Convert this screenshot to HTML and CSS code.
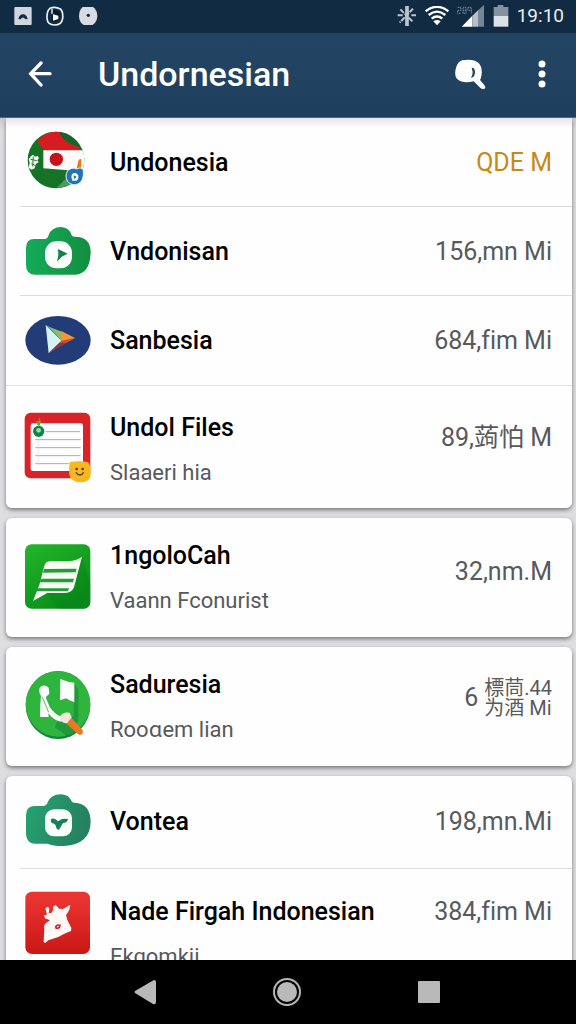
FILE: index.html
```html
<!DOCTYPE html>
<html lang="id">
<head>
<meta charset="utf-8">
<meta name="viewport" content="width=device-width, initial-scale=1">
<title>Undornesian</title>
<link rel="stylesheet" href="styles.css">
</head>
<body>
<div class="screen">
  <div class="status">
    <div class="status-group status-left">
      <svg width="18" height="20" viewBox="0 0 54 60"><rect x="1" y="3" width="52" height="54" rx="3" fill="#cfd6de"/><path d="M13 39q3-14 14-14t14 14l-7 1-4-5h-6l-4 5z" fill="#142c42"/></svg>
      <svg width="18" height="20" viewBox="0 0 54 60"><path d="M12 7Q27 0 43 9q9 7 7 28-3 20-24 20-22 0-23-20Q2 14 12 7z" fill="none" stroke="#eef3f7" stroke-width="5"/><path d="M18 10q14-2 22 8 6 12-3 23-9 9-20 4V28h8v-8l-9 2z" fill="#071b2c"/><path d="M21 25l16 4v10l-16 5z" fill="#fff"/><path d="M18 9v14" stroke="#fff" stroke-width="4"/></svg>
      <svg width="20" height="20" viewBox="0 0 60 60"><path d="M14 3h31q12 8 13 27-1 19-14 27H17Q4 50 3 31 3 12 14 3z" fill="#d6dce2"/><circle cx="31" cy="28" r="5" fill="#13293e"/></svg>
    </div>
    <div class="status-group status-right">
      <svg width="20" height="20" viewBox="0 0 60 60" stroke="#bac7d2" stroke-width="6" fill="none"><path d="M30 0v60" stroke-width="11"/><path d="M10 10l38 38M48 8L8 50M2 28h15M43 28h14" stroke-dasharray="15 3"/></svg>
      <svg width="24" height="20" viewBox="0 0 72 60" fill="none" stroke="#fff" stroke-width="7"><path d="M2 16q34-27 68 0M11 27q25-20 50 0M20 38q16-13 32 0"/><path d="M36 58L25 46q11-8 22 0z" fill="#fff" stroke="none"/></svg>
      <svg width="28" height="22" viewBox="0 0 84 66"><path d="M14 65L46 32v33z" fill="#fff"/><path d="M46 65V32L63 16v49z" fill="#b4c0ca"/><path d="M63 65V16L81 0v65z" fill="#738797"/><path d="M2 7h10v9H2v9h10M18 7h9v18h-9zM18 16h9M33 7h10v18M33 7v9h10" fill="none" stroke="#7890a2" stroke-width="3" stroke-dasharray="4 2"/></svg>
      <svg width="16" height="22" viewBox="0 0 48 66"><path d="M2 33V6h12V0h17v6h15v27z" fill="#8593a0"/><path d="M2 33h44v32H2z" fill="#dce2e8"/></svg>
      <time class="clock">19:10</time>
    </div>
  </div>

  <header class="appbar">
    <button class="icon-button" aria-label="Back"><svg width="24" height="26" viewBox="0 0 72 78" fill="none" stroke="#fff" stroke-width="10" stroke-linecap="round"><path d="M66 38H8M39 6L8 38l31 34"/></svg></button>
    <h1 class="title">Undornesian</h1>
    <button class="icon-button" aria-label="Search"><svg width="32" height="30" viewBox="500 175 96 90"><path d="M525 179q36-6 51 10 9 10 7 30-1 13-5 19l13 15q8 12-5 12-5 0-9-5l-18-18q-36 9-52-10-7-13 0-34 6-16 18-19z" fill="#fff"/><path d="M553 201q10-1 10 14t-12 17q5-9 5-18z" fill="#234361"/></svg></button>
    <button class="icon-button menu-button" aria-label="More options"><svg width="8" height="28" viewBox="0 0 8 28" fill="#fff"><circle cx="4" cy="4" r="3.5"/><circle cx="4" cy="14" r="3.5"/><circle cx="4" cy="24" r="3.5"/></svg></button>
  </header>

  <main class="content">
    <ul class="card">
      <li class="row inset">
        <svg class="app-icon" viewBox="75 44 198 198"><defs><clipPath id="flag"><circle cx="168" cy="134" r="85"/></clipPath></defs><g clip-path="url(#flag)"><path d="M80 40h180v190H80z" fill="#157326"/><path d="M112 76L150 44h45l48 61H131z" fill="#d51c20"/><path d="M176 49q46 8 68 55-8-12-27-16-29-12-41-39z" fill="#16652a"/><path d="M130 105h125v61l-50-1-75-6z" fill="#fffafa"/><circle cx="169" cy="132" r="20" fill="#ca1019"/><path d="M168 220l25-26 10-6 12 20z" fill="#4b9a60"/></g><path d="M93 122l7-4 5 6 8-3 4 8-5 6 4 6-8 4-4 14-9 4-9-6 3-15-3-10z" fill="#eff7ed"/><path d="M92 132l18 4M100 124l-2 29M94 145l13 6" stroke="#37733f" stroke-width="3"/><path d="M236 133l8-3-1 31-13-2z" fill="#e8791b"/><path d="M203 166q15-12 26-5 12-8 21 2 3 35-16 43-16 7-31-7-10-17 0-33z" fill="#2173b8" stroke="#e7f0f7" stroke-width="3"/><path d="M216 176q10-7 18 2 4 12-5 18h-12q-6-10-1-20z" fill="#fff"/><path d="M221 180l9 4-8 8z" fill="#2173b8"/></svg>
        <div class="text"><h2 class="name">Undonesia</h2></div>
        <span class="value accent">QDE M</span>
      </li>
      <li class="row inset">
        <svg class="app-icon" viewBox="75 309 198 198"><defs><linearGradient id="camera"><stop stop-color="#13ac59"/><stop offset="1" stop-color="#138e40"/></linearGradient></defs><path d="M78 397q0-28 24-28h32q9 0 12-12 8-23 37-24 25 1 32 25 2 5 11 4 45 1 46 45-1 66-46 69H106q-28 0-28-30z" fill="url(#camera)"/><rect x="135" y="376" width="81" height="81" rx="34" fill="#fafffc"/><path d="M174 399l29 14-18 9-14 15 4-20z" fill="#187f4b"/></svg>
        <div class="text"><h2 class="name">Vndonisan</h2></div>
        <span class="value">156,mn Mi</span>
      </li>
      <li class="row">
        <svg class="app-icon" viewBox="75 24 198 198"><ellipse cx="174" cy="121" rx="98" ry="73" fill="#223c78"/><path d="M137 75l48 47-39 38z" fill="#d7f2f2"/><path d="M137 75l51 24-3 22z" fill="#55ad9c"/><path d="M152 83l37 13 9 19-13 7z" fill="#91bd5a"/><path d="M185 94l40 20-30 16-10-8z" fill="#f6982f"/><path d="M185 122l38-8-77 46z" fill="#c84c3d"/><path d="M179 128l16 2-49 30z" fill="#7f354e"/></svg>
        <div class="text"><h2 class="name">Sanbesia</h2></div>
        <span class="value">684,fim Mi</span>
      </li>
      <li class="row double lowered">
        <svg class="app-icon" viewBox="75 353 198 198"><rect x="74" y="340" width="197" height="197" rx="18" fill="#d92328"/><rect x="92" y="372" width="157" height="143" rx="7" fill="#fff"/><path d="M137 397h103M106 421h136M106 445h136M106 469h136M106 493h102" stroke="#a8aaad" stroke-width="3"/><path d="M116 385v114" stroke="#ddd" stroke-width="2"/><path d="M112 378l-4-14 8 3 1-13 6 13-4 12z" fill="#74a336"/><circle cx="116" cy="396" r="17" fill="#118348"/><circle cx="116" cy="393" r="7" fill="#9cdcae"/><path d="M210 488q26-5 54 0 9 9 8 41-4 20-32 20-27-1-32-23-3-19 2-38z" fill="#f5b91e"/><path d="M227 519q14 16 24 0" fill="none" stroke="#583817" stroke-width="4"/><circle cx="230" cy="509" r="4" fill="#583817"/><circle cx="248" cy="509" r="4" fill="#583817"/></svg>
        <div class="text"><h2 class="name">Undol Files</h2><p class="sub">Slaaeri hia</p></div>
        <span class="value raised">89,蒟怕 M</span>
      </li>
    </ul>

    <ul class="card">
      <li class="row double">
        <svg class="app-icon" viewBox="75 92 198 198"><defs><linearGradient id="leaf" x2=".6" y2="1"><stop stop-color="#25b62b"/><stop offset="1" stop-color="#098d19"/></linearGradient></defs><rect x="75" y="90" width="196" height="193" rx="20" fill="url(#leaf)"/><path d="M136 236L246 128l25 80v55q0 20-20 20h-75z" fill="#078018" opacity=".35"/><path d="M139 144q9-6 67-3 25-3 40-14l-24 92q-7 17-27 17h-53l-43 24 19-48 12-46q2-14 9-22z" fill="#f8fff3"/><path d="M132 164l98-1-3 11-98 1zM123 193h99l-3 11H119zM111 222h97l-5 9h-94z" fill="#269b3c"/></svg>
        <div class="text"><h2 class="name">1ngoloCah</h2><p class="sub">Vaann Fconurist</p></div>
        <span class="value lifted">32,nm.M</span>
      </li>
    </ul>

    <ul class="card">
      <li class="row double">
        <svg class="app-icon" viewBox="75 102 198 198"><defs><clipPath id="disc"><ellipse cx="174" cy="195" rx="97" ry="102"/></clipPath></defs><ellipse cx="174" cy="195" rx="97" ry="102" fill="#128736"/><ellipse cx="174" cy="192" rx="97" ry="98" fill="#2fb53d"/><g clip-path="url(#disc)"><path d="M221 127l14 22v95l-10 12v34h-22l-38-28 10-28 46-5z" fill="#178a37" opacity=".65"/></g><path d="M181 117q22 10 42 11v59q-15-5-25-12l-18 6z" fill="#fcfffc"/><path d="M119 143q13-13 27 0l2 18-11 11 12 29q15 22 36 30l-3 14q-19-2-37-25l1 11h-26l1-38 2-26q-8-10-4-24z" fill="#fcfffc"/><path d="M126 170l20 47" stroke="#5cbb65" stroke-width="3"/><path d="M180 229q9-15 29-11l7 17-12 16q-16-1-25-10z" fill="#f2e7db"/><path d="M214 233l33 36q5 14-6 15-6 1-11-5l-30-28z" fill="#ef7624"/></svg>
        <div class="text"><h2 class="name">Saduresia</h2><p class="sub">Rooɑem lian</p></div>
        <span class="value stacked"><span>6</span><span class="stack"><span>標茼.44</span><span>为酒 Mi</span></span></span>
      </li>
    </ul>

    <ul class="card last">
      <li class="row inset tall">
        <svg class="app-icon" viewBox="75 60 198 198"><defs><linearGradient id="teal" x2="1" y2=".3"><stop stop-color="#25a473"/><stop offset="1" stop-color="#258260"/></linearGradient></defs><path d="M78 139q0-27 24-28h29q9-1 12-11 9-23 39-24 24 0 34 22 3 3 8 3 47 2 48 57-1 68-80 73-31 1-49-7h-36q-29 1-29-34z" fill="url(#teal)"/><rect x="135" y="121" width="81" height="81" rx="27" fill="#fafffc"/><path d="M154 149q12-3 20 8l8-5q6-5 22-2-2 12-15 12l-12 20q-8 1-9-10-1-7-13-10-5-6-1-13z" fill="#168057"/></svg>
        <div class="text"><h2 class="name">Vontea</h2></div>
        <span class="value">198,mn.Mi</span>
      </li>
      <li class="row double lowered top">
        <svg class="app-icon" viewBox="75 359 198 198"><defs><linearGradient id="red" x2="0" y2="1"><stop stop-color="#ed3734"/><stop offset="1" stop-color="#ca1716"/></linearGradient></defs><rect x="76" y="367" width="194" height="187" rx="20" fill="url(#red)"/><path d="M136 417l8-5 4 6-2 14 8-1 6-10-1-8 8-6 7 7 3 4 12 1 22-13-3 15-10 17 4 14 12 24-1 9-20 8-18 10-30 10-9 8-5-3 2-39q-3-13 6-19l11-7-15-6-3-9 9-2z" fill="#fff9f7"/><path d="M166 475q4-11 14-7-2 12-14 7" fill="none" stroke="#d52625" stroke-width="5"/></svg>
        <div class="text"><h2 class="name">Nade Firgah Indonesian</h2><p class="sub">Ekgomkii</p></div>
        <span class="value">384,fim Mi</span>
      </li>
    </ul>
  </main>

  <nav class="navbar" aria-label="System navigation">
    <button class="nav-button" aria-label="Back"><svg width="22" height="26" viewBox="0 0 22 26"><path d="M20 1q2 0 2 2v20q0 3-3 2L1 14q-1-1 0-2z" fill="#b9b9b9"/></svg></button>
    <button class="nav-button" aria-label="Home"><svg width="30" height="30" viewBox="0 0 30 30"><circle cx="15" cy="15" r="13" fill="none" stroke="#b5b5b5" stroke-width="2"/><circle cx="15" cy="15" r="10" fill="#b9b9b9"/></svg></button>
    <button class="nav-button" aria-label="Recent apps"><svg width="24" height="24" viewBox="0 0 24 24"><rect x="1" y="1" width="22" height="22" rx="1" fill="#b9b9b9"/></svg></button>
  </nav>
</div>
</body>
</html>
```
FILE: styles.css
```css
* { box-sizing: border-box; }

body {
  margin: 0;
  background: #dedee0;
  color: #000;
  font-family: Roboto, "Noto Sans CJK SC", sans-serif;
  font-variant-ligatures: none;
}

h1, h2, p, ul { margin: 0; padding: 0; }
ul { list-style: none; }
svg { display: block; flex: none; }

button {
  display: flex;
  align-items: center;
  justify-content: center;
  border: 0;
  padding: 0;
  background: none;
}

.screen {
  display: flex;
  flex-direction: column;
  height: 100vh;
  overflow: hidden;
}

.status {
  flex: none;
  display: flex;
  justify-content: space-between;
  align-items: center;
  height: 33px;
  padding: 0 12px 2px 14px;
  background: #102b42;
}

.status-group { display: flex; align-items: center; }
.status-left { gap: 14px; }
.status-right { gap: 8px; }

.clock {
  color: #e9eff4;
  font-size: 19px;
  line-height: 30px;
}

.appbar {
  flex: none;
  display: flex;
  align-items: center;
  height: 85px;
  padding: 0 10px 2px 16px;
  background: linear-gradient(#234563, #1f3f5e);
  border-bottom: 1px solid #4f6982;
}

.icon-button { width: 48px; height: 48px; }
.menu-button { margin-left: 24px; }

.title {
  flex: 1;
  padding-left: 34px;
  color: #fff;
  font-size: 34px;
  font-weight: 500;
  line-height: 48px;
}

.content {
  flex: 1;
  min-height: 0;
  overflow: hidden;
  display: flex;
  flex-direction: column;
  gap: 10px;
  padding: 0 4px 0 6px;
  background: linear-gradient(#c9cad0, #dedee0 12px);
}

.card {
  flex: none;
  border-radius: 6px;
  background: #fefefe;
  box-shadow: 0 2px 4px #77777a;
}

.card:first-child {
  border-radius: 0 0 6px 6px;
  background: linear-gradient(#e6e6ea, #fefefe 10px);
}

.row {
  position: relative;
  display: flex;
  align-items: center;
  gap: 19px;
  min-height: 89px;
  padding: 0 20px 0 19px;
}

.row + .row { border-top: 1px solid #dfe0e3; }
.inset + .row { border-top: 0; }

.inset::after {
  content: "";
  position: absolute;
  right: 0;
  bottom: 0;
  left: 14px;
  height: 1px;
  background: #dcdddf;
}

.tall {
  min-height: 93px;
  padding-bottom: 2px;
}

.double { min-height: 119px; }
.lowered { padding-top: 19px; padding-bottom: 13px; }

.top {
  align-items: flex-start;
  padding-top: 20px;
}

.app-icon {
  width: 66px;
  height: 66px;
  overflow: visible;
}

.text { flex: 1; min-width: 0; }

.name {
  font-size: 25px;
  font-weight: 500;
  line-height: 45px;
  white-space: nowrap;
}

.sub {
  color: #58595b;
  font-size: 22px;
  line-height: 45px;
}

.value {
  color: #58595b;
  font-size: 25px;
  line-height: 45px;
  white-space: nowrap;
}

.accent { color: #c58a16; }
.raised { padding-bottom: 26px; }
.lifted { padding-bottom: 12px; }

.stacked {
  display: flex;
  align-items: center;
  gap: 6px;
  padding-bottom: 18px;
}

.stack {
  display: flex;
  flex-direction: column;
  font-size: 20px;
  line-height: 20px;
}

.navbar {
  flex: none;
  display: flex;
  justify-content: center;
  align-items: center;
  gap: 94px;
  height: 64px;
  padding-right: 2px;
  background: #000;
}

.nav-button { width: 48px; height: 48px; }
```
